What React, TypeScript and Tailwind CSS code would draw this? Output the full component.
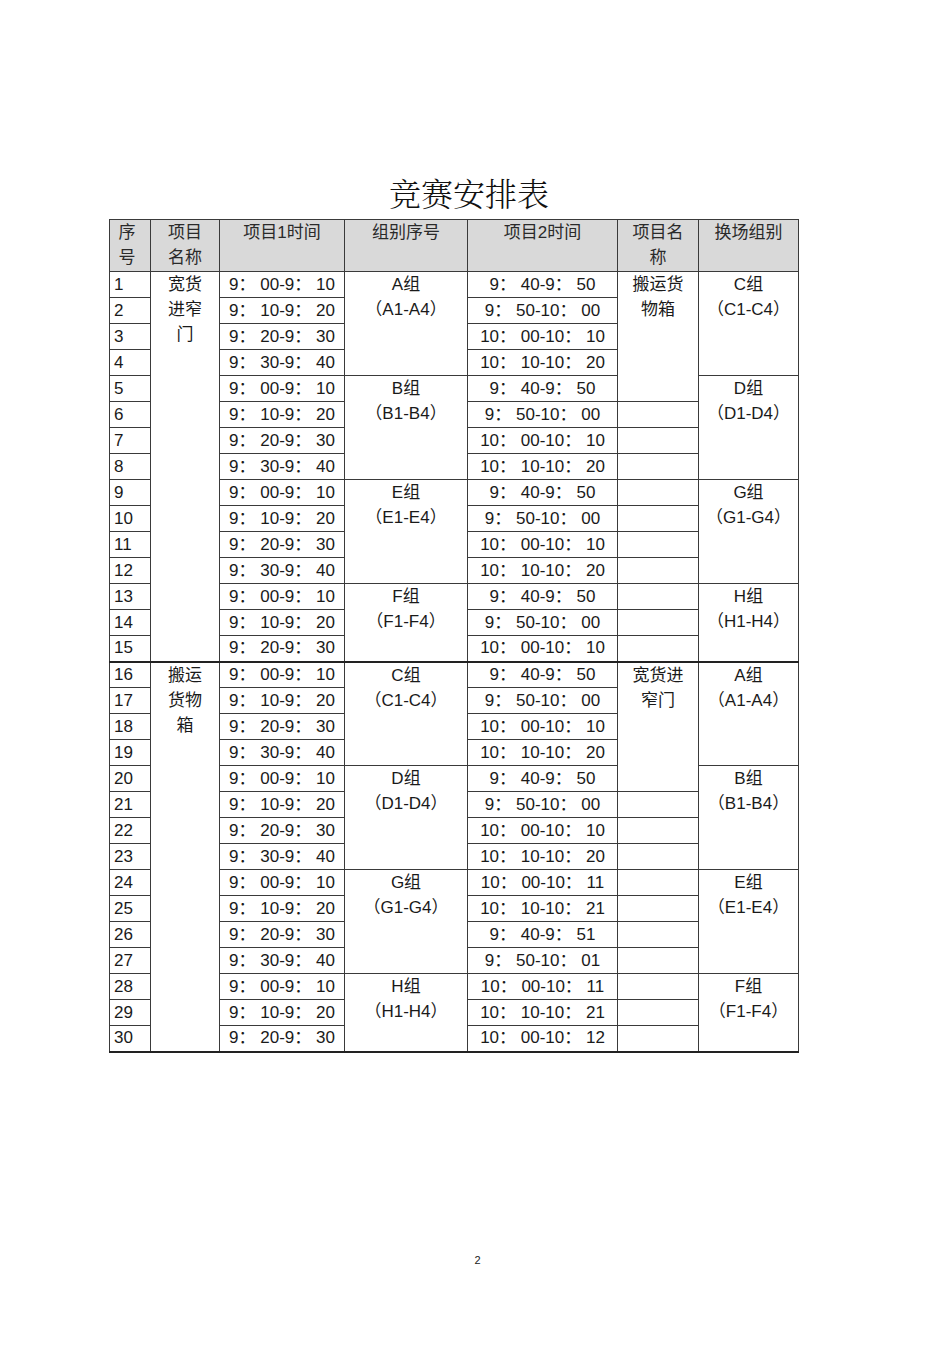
import React from "react";

const T1 = ["9： 00-9： 10", "9： 10-9： 20", "9： 20-9： 30", "9： 30-9： 40"];
const T2 = ["9： 40-9： 50", "9： 50-10： 00", "10： 00-10： 10", "10： 10-10： 20"];
const T3 = [
  "10： 00-10： 11",
  "10： 10-10： 21",
  "9： 40-9： 51",
  "9： 50-10： 01",
  "10： 00-10： 11",
  "10： 10-10： 21",
  "10： 00-10： 12",
];

type Row = {
  n: number;
  t1: string;
  t2: string;
};

const rows: Row[] = [];
for (let i = 1; i <= 30; i++) {
  const half = i <= 15 ? i - 1 : i - 16;
  const t1 = T1[half % 4];
  let t2: string;
  if (i >= 24) t2 = T3[i - 24];
  else t2 = T2[half % 4];
  rows.push({ n: i, t1, t2 });
}

const g4: Record<number, [string, number]> = {
  1: ["A", 4],
  5: ["B", 4],
  9: ["E", 4],
  13: ["F", 3],
  16: ["C", 4],
  20: ["D", 4],
  24: ["G", 4],
  28: ["H", 3],
};
const g7: Record<number, [string, number]> = {
  1: ["C", 4],
  5: ["D", 4],
  9: ["G", 4],
  13: ["H", 3],
  16: ["A", 4],
  20: ["B", 4],
  24: ["E", 4],
  28: ["F", 3],
};

const bd = "border border-[#3a3a3a]";

function Group({ l }: { l: string }) {
  return (
    <>
      <div>{l}组</div>
      <div>（{l}1-{l}4）</div>
    </>
  );
}

export default function App() {
  const font = {
    fontFamily: '"Liberation Sans", "Noto Sans CJK SC", sans-serif',
  };
  return (
    <div
      className="relative w-[950px] h-[1345px] bg-white text-[#1a1a1a]"
      style={font}
    >
      <div className="pt-[172px] pl-[109px]">
        <div className="w-[689px] flex justify-center">
          <h1
            className="text-[32px] leading-[40px] pl-[31px] text-[#111]"
            style={{
              fontFamily:
                '"Noto Serif CJK SC", "Liberation Serif", "Noto Sans CJK SC", serif',
              fontWeight: 300,
            }}
          >
            竞赛安排表
          </h1>
        </div>
        <table className="mt-[7px] w-[689px] table-fixed border-collapse text-[17px]">
          <colgroup>
            <col className="w-[41px]" />
            <col className="w-[69px]" />
            <col className="w-[125px]" />
            <col className="w-[123px]" />
            <col className="w-[150px]" />
            <col className="w-[81px]" />
            <col className="w-[100px]" />
          </colgroup>
          <thead>
            <tr className="h-[52px] bg-[#d9d9d9] text-[#2a2a2a]">
              <th className={`${bd} align-top font-normal leading-[25px] p-0 pr-[6px]`}>
                序<br />号
              </th>
              <th className={`${bd} align-top font-normal leading-[25px] p-0`}>
                项目<br />名称
              </th>
              <th className={`${bd} align-top font-normal leading-[25px] p-0`}>
                项目1时间
              </th>
              <th className={`${bd} align-top font-normal leading-[25px] p-0`}>
                组别序号
              </th>
              <th className={`${bd} align-top font-normal leading-[25px] p-0`}>
                项目2时间
              </th>
              <th className={`${bd} align-top font-normal leading-[25px] p-0`}>
                项目名<br />称
              </th>
              <th className={`${bd} align-top font-normal leading-[25px] p-0`}>
                换场组别
              </th>
            </tr>
          </thead>
          <tbody>
            {rows.map((r) => {
              const thick = r.n === 16 ? "border-t-2 border-t-[#222]" : "";
              return (
                <tr key={r.n} className="h-[26px]">
                  <td className={`${bd} ${thick} p-0 pl-[4px] leading-[24px] align-middle`}>
                    {r.n}
                  </td>
                  {r.n === 1 && (
                    <td
                      rowSpan={15}
                      className={`${bd} p-0 align-top text-center leading-[25px]`}
                    >
                      宽货
                      <br />
                      进窄
                      <br />门
                    </td>
                  )}
                  {r.n === 16 && (
                    <td
                      rowSpan={15}
                      className={`${bd} ${thick} p-0 align-top text-center leading-[25px]`}
                    >
                      搬运
                      <br />
                      货物
                      <br />箱
                    </td>
                  )}
                  <td className={`${bd} ${thick} p-0 text-center leading-[24px] align-middle whitespace-pre`}>
                    {r.t1}
                  </td>
                  {g4[r.n] && (
                    <td
                      rowSpan={g4[r.n][1]}
                      className={`${bd} ${thick} p-0 align-top text-center leading-[25px]`}
                    >
                      <Group l={g4[r.n][0]} />
                    </td>
                  )}
                  <td className={`${bd} ${thick} p-0 text-center leading-[24px] align-middle whitespace-pre`}>
                    {r.t2}
                  </td>
                  {r.n === 1 && (
                    <td
                      rowSpan={5}
                      className={`${bd} p-0 align-top text-center leading-[25px]`}
                    >
                      搬运货
                      <br />
                      物箱
                    </td>
                  )}
                  {r.n === 16 && (
                    <td
                      rowSpan={5}
                      className={`${bd} ${thick} p-0 align-top text-center leading-[25px]`}
                    >
                      宽货进
                      <br />
                      窄门
                    </td>
                  )}
                  {((r.n > 5 && r.n <= 15) || r.n > 20) && (
                    <td className={`${bd} p-0`}></td>
                  )}
                  {g7[r.n] && (
                    <td
                      rowSpan={g7[r.n][1]}
                      className={`${bd} ${thick} p-0 align-top text-center leading-[25px]`}
                    >
                      <Group l={g7[r.n][0]} />
                    </td>
                  )}
                </tr>
              );
            })}
          </tbody>
          <tfoot>
            <tr>
              <td colSpan={7} className="border-t-2 border-t-[#222] p-0 h-0"></td>
            </tr>
          </tfoot>
        </table>
      </div>
      <div className="absolute left-0 top-[1252px] w-[950px] flex justify-center">
        <span className="text-[11px] leading-[16px] text-[#222] pl-[5px]">2</span>
      </div>
    </div>
  );
}
